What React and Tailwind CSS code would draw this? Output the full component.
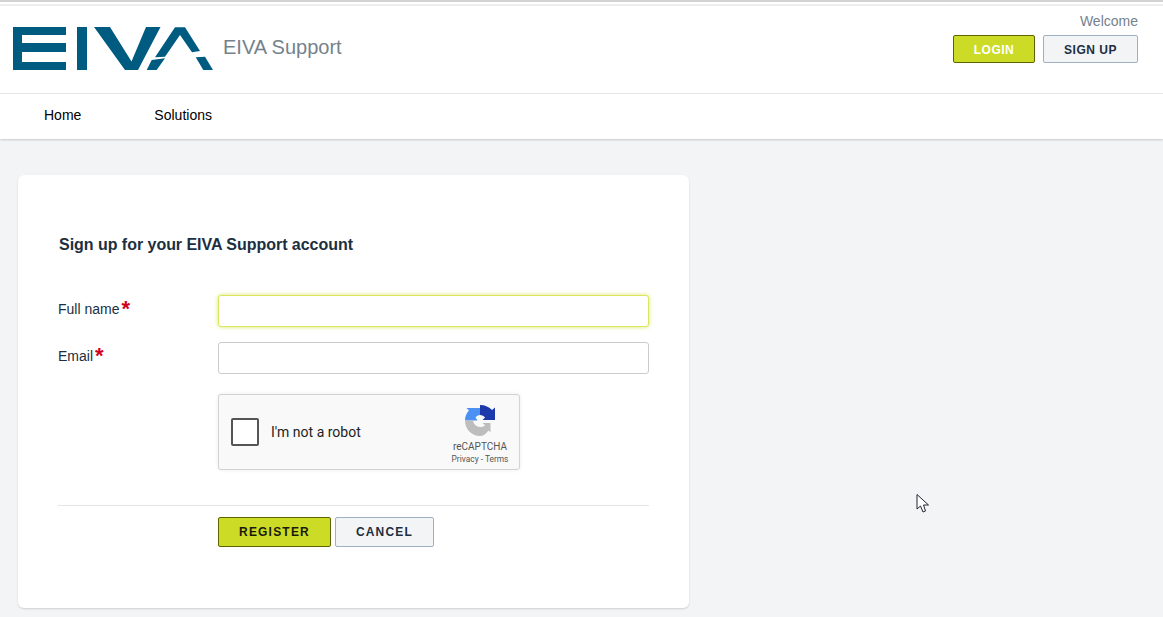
const Logo = () => (
    <svg width="201" height="44" viewBox="13 27 201 44" className="block" fill="#005b81">
        <path d="M13 27H66V35H22V43H66V52H22V62H66V70H13Z" />
        <path d="M77 27H87V70H77Z" />
        <path d="M94 27H110L131.500 61.500L146 27H160.500L138 70H125Z" />
        <path d="M155 57.300L175 27.300H185L200 51L192 52.300L180 35L165 56.700Z" />
        <path d="M195.700 57.300L205 56.700L213 70H203.300Z" />
        <path d="M151.700 60L165 58.300L156.700 70H146.700Z" />
    </svg>
);

const RecaptchaIcon = () => (
    <svg width="30" height="31" viewBox="0 0 30 31" className="block">
        <path d="M0 15.500C0 11.500 1.500 8 4 5.500L1.500 3H15V10C13 10 11.500 11 10.500 12.500L12.500 15.500Z" fill="#4a90f5" />
        <path d="M15 0C20 0 24.500 2 27 5L30 2.500V15H17.500L20 12.500C19 11 17 10 15 10Z" fill="#1c3aa9" />
        <path d="M0 15.500H8C8.500 19 11 22 15.500 22C17.500 22 19 21.500 20 20L17.500 18H25.500V27.500L23.500 25.500C21 29 18.500 31 15 31C6.500 31 0 24 0 15.500Z" fill="#bdbdbd" />
    </svg>
);

const Cursor = () => (
    <svg width="14" height="21" viewBox="0 0 14 20" className="absolute left-[916px] top-[493px]">
        <path d="M1 1V15.500L4.500 12.500L7 18.500L9.500 17.500L7.500 11.500H12.500Z" fill="#fff" stroke="#1f2430" strokeWidth="1" />
    </svg>
);

const Label = ({ children }) => (
    <div className="w-[160px] shrink-0 flex items-start text-[14px] leading-[20px] text-[#1c2f41]">
        {children}
        <span className="ml-[2px] text-[#d0021b] text-[22px] leading-[20px] font-bold">*</span>
    </div>
);

const App = () => {
    return (
        <div className="relative h-[617px] overflow-hidden bg-[#f3f4f6] font-['Liberation_Sans',Arial,sans-serif]">
            <div className="h-[2px] bg-[#d2d2d2]" />
            <div className="h-[2px] bg-white" />
            <div className="h-[2px] bg-[#eeeeee]" />

            <header className="bg-white h-[87px] border-b border-[#e9eaec] box-content flex justify-between">
                <div className="flex pl-[13px] pt-[21px]">
                    <Logo />
                    <span className="ml-[9px] mt-[8px] text-[20px] leading-[24px] text-[#75828c]">EIVA Support</span>
                </div>
                <div className="flex flex-col items-end pr-[25px] pt-[7px]">
                    <span className="text-[14px] leading-[16px] text-[#75828c]">Welcome</span>
                    <div className="flex gap-[8px] mt-[6px]">
                        <button className="w-[82px] h-[28px] pt-[1px] rounded-[2px] border border-[#5f6300] bg-[#cbdb26] text-white text-[12px] font-bold tracking-[0.5px]">LOGIN</button>
                        <button className="w-[95px] h-[28px] pt-[1px] rounded-[2px] border border-[#9db0c4] bg-[#f3f4f6] text-[#1c2f41] text-[12px] font-bold tracking-[0.5px]">SIGN UP</button>
                    </div>
                </div>
            </header>

            <nav className="bg-white h-[45px] flex items-center pl-[44px] pb-[2px] gap-[73px] text-[14px] text-black shadow-[0_1px_2px_rgba(0,0,0,0.18)]">
                <a>Home</a>
                <a>Solutions</a>
            </nav>

            <main className="pt-[36px] pl-[18px]">
                <section className="w-[671px] h-[433px] bg-white rounded-[6px] shadow-[0_1px_2px_rgba(0,0,0,0.15)] pl-[40px] pr-[40px] pt-[60px]">
                    <h1 className="pl-[1px] text-[16px] leading-[20px] font-bold tracking-[-0.03px] text-[#1c2f41]">Sign up for your EIVA Support account</h1>

                    <div className="mt-[40px] flex">
                        <div className="pt-[4px]"><Label>Full name</Label></div>
                        <input className="w-[431px] h-[32px] rounded-[3px] border border-[#dbe65f] shadow-[0_0_4px_rgba(203,219,38,0.7)] bg-white outline-none" />
                    </div>

                    <div className="mt-[15px] flex">
                        <div className="pt-[4px]"><Label>Email</Label></div>
                        <input className="w-[431px] h-[32px] rounded-[3px] border border-[#cccccc] bg-white outline-none" />
                    </div>

                    <div className="mt-[20px] ml-[160px] w-[302px] h-[76px] rounded-[3px] border border-[#d3d3d3] bg-[#f9f9f9] shadow-[0_0_4px_rgba(0,0,0,0.08)] flex items-center pl-[12px]">
                        <div className="w-[28px] h-[28px] rounded-[2px] border-2 border-[#555555] bg-white" />
                        <span className="ml-[12px] text-[14px] text-[#222222] font-['Roboto',sans-serif]">I'm not a robot</span>
                        <div className="ml-auto mr-[9px] w-[60px] flex flex-col items-center pt-[6px]">
                            <RecaptchaIcon />
                            <span className="mt-[5px] text-[10px] leading-[12px] text-[#555555] font-['Roboto',sans-serif]">reCAPTCHA</span>
                            <span className="mt-[1px] text-[8.400px] leading-[11px] text-[#555555] font-['Roboto',sans-serif] whitespace-nowrap">Privacy - Terms</span>
                        </div>
                    </div>

                    <div className="mt-[35px] border-t border-[#e5e5e5] pt-[11px] pl-[160px] flex gap-[4px]">
                        <button className="w-[113px] h-[30px] rounded-[2px] border border-[#5f6300] bg-[#cbdb26] text-[#1a1a0a] text-[12px] font-bold tracking-[1.200px]">REGISTER</button>
                        <button className="w-[99px] h-[30px] rounded-[2px] border border-[#9db0c4] bg-[#f3f4f6] text-[#1c2f41] text-[12px] font-bold tracking-[1.200px]">CANCEL</button>
                    </div>
                </section>
            </main>

            <Cursor />
        </div>
    );
};

export default App;
